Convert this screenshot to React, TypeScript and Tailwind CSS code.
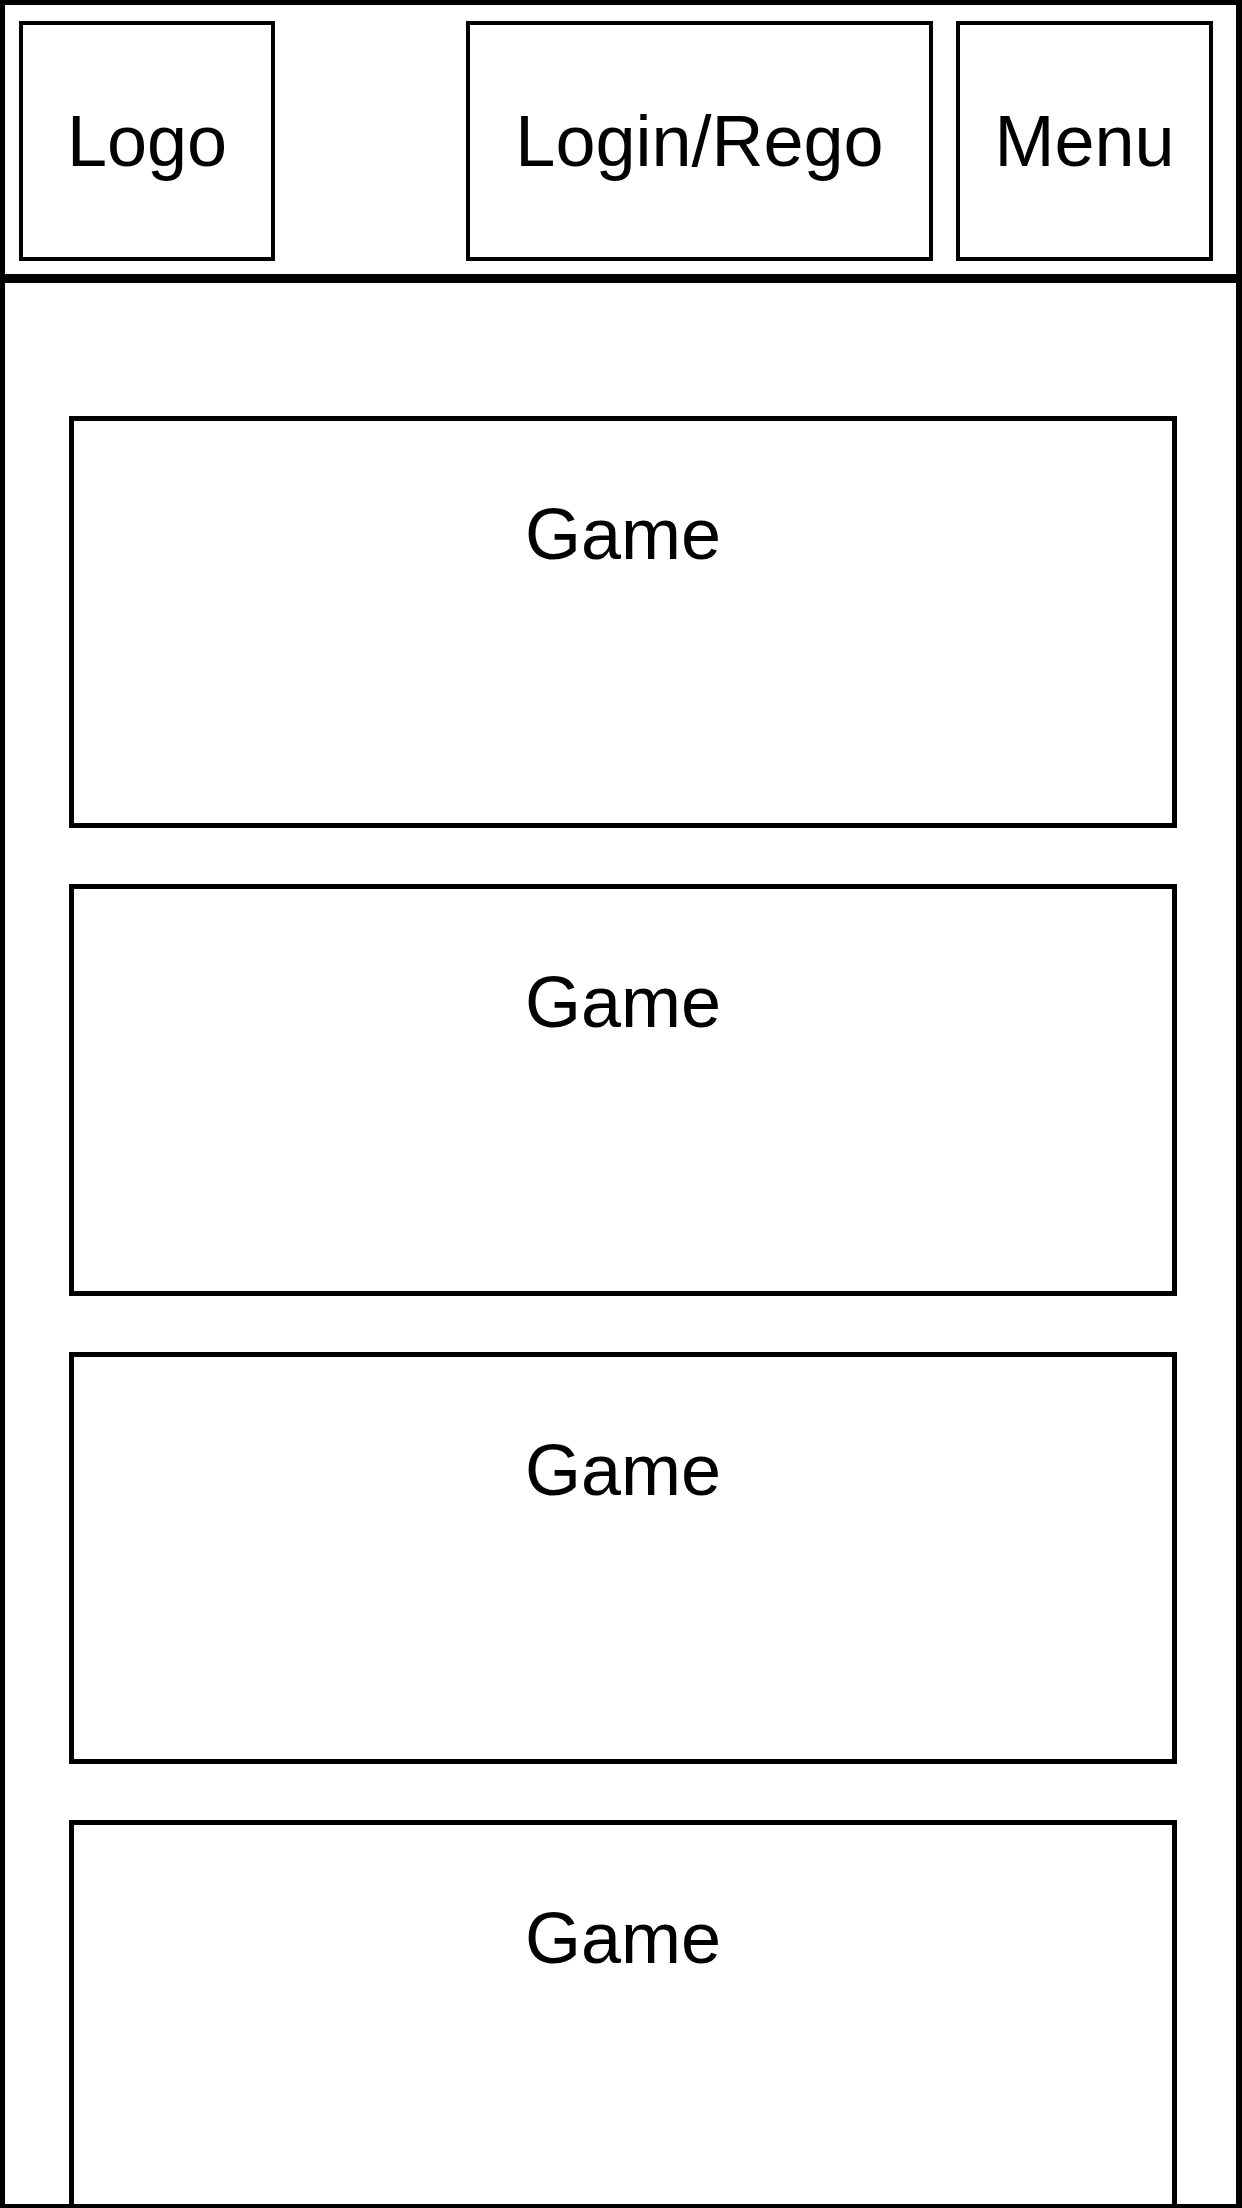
const font = { fontFamily: '"Liberation Sans", Arial, sans-serif' };

function Box({ label, className }: { label: string; className: string }) {
  return (
    <div className={`h-[240px] border-4 border-black flex items-center justify-center text-[72px] leading-none text-black ${className}`}>
      {label}
    </div>
  );
}

function GameCard() {
  return (
    <div className="w-[1108px] h-[412px] shrink-0 border-[5px] border-black pt-[77px] text-center text-[72px] leading-none text-black">
      Game
    </div>
  );
}

export default function App() {
  const games = [1, 2, 3, 4];

  return (
    <div
      className="w-[1242px] h-[2208px] overflow-hidden bg-white border-l-[5px] border-r-[6px] border-t-[5px] border-b-[4px] border-black flex flex-col"
      style={font}
    >
      {/* Header */}
      <header className="flex items-start pt-[16px] pl-[14px] pr-[23px] pb-[13px] border-b-[9px] border-black">
        <Box label="Logo" className="w-[256px]" />
        <div className="flex-1" />
        <Box label="Login/Rego" className="w-[467px]" />
        <Box label="Menu" className="w-[257px] ml-[23px]" />
      </header>

      {/* Games list */}
      <main className="flex-1 overflow-hidden pl-[64px] pt-[133px] flex flex-col gap-[56px]">
        {games.map((g) => (
          <GameCard key={g} />
        ))}
      </main>
    </div>
  );
}
